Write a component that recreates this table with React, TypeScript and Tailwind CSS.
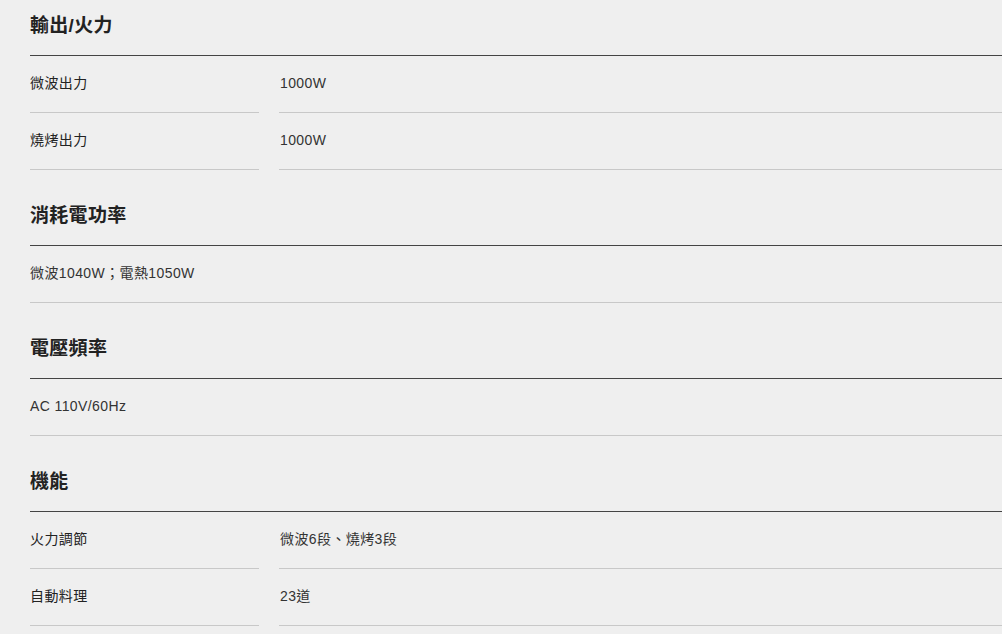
import React from "react";

type Row = { label: string; value: string };
type Section = { title: string; rows?: Row[]; text?: string };

const sections: Section[] = [
  {
    title: "輸出/火力",
    rows: [
      { label: "微波出力", value: "1000W" },
      { label: "燒烤出力", value: "1000W" },
    ],
  },
  { title: "消耗電功率", text: "微波1040W；電熱1050W" },
  { title: "電壓頻率", text: "AC 110V/60Hz" },
  {
    title: "機能",
    rows: [
      { label: "火力調節", value: "微波6段、燒烤3段" },
      { label: "自動料理", value: "23道" },
    ],
  },
];

export default function App() {
  return (
    <div
      className="min-h-[634px] w-full overflow-hidden bg-[#efefef] pl-[30px] pt-[1px]"
      style={{ fontFamily: '"Liberation Sans", "Noto Sans CJK TC", sans-serif' }}
    >
      {sections.map((s, i) => (
        <section key={s.title} className={i === 0 ? "" : "mt-[21px]"}>
          <h2 className="h-[55px] border-b border-[#444] pt-[11px] text-[19px] font-bold leading-[27px] tracking-[0.3px] text-[#222]">
            {s.title}
          </h2>
          {s.rows &&
            s.rows.map((r) => (
              <div key={r.label} className="flex text-[14px] leading-[20px] tracking-[0.4px]">
                <div className="h-[57px] w-[229px] shrink-0 border-b border-[#c8c8c8] pt-[17px] text-[#222]">
                  {r.label}
                </div>
                <div className="ml-[20px] h-[57px] flex-1 border-b border-[#c8c8c8] pl-[1px] pt-[17px] text-[#333]">
                  {r.value}
                </div>
              </div>
            ))}
          {s.text && (
            <div className="h-[57px] border-b border-[#c8c8c8] pt-[17px] text-[14px] leading-[20px] tracking-[0.4px] text-[#333]">
              {s.text}
            </div>
          )}
        </section>
      ))}
    </div>
  );
}
